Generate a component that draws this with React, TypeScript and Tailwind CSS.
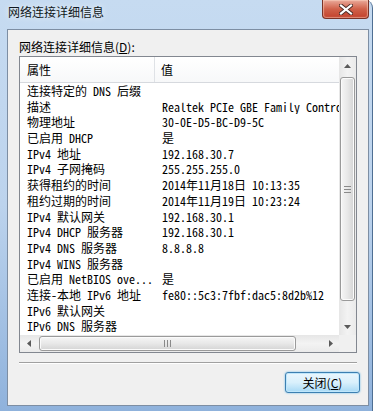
import React from 'react';

const FONT = "font-['Noto_Sans_Mono_CJK_SC','Noto_Sans_CJK_SC',monospace]";

const rows: [string, string][] = [
  ['连接特定的 DNS 后缀', ''],
  ['描述', 'Realtek PCIe GBE Family Controller'],
  ['物理地址', '30-0E-D5-BC-D9-5C'],
  ['已启用 DHCP', '是'],
  ['IPv4 地址', '192.168.30.7'],
  ['IPv4 子网掩码', '255.255.255.0'],
  ['获得租约的时间', '2014年11月18日 10:13:35'],
  ['租约过期的时间', '2014年11月19日 10:23:24'],
  ['IPv4 默认网关', '192.168.30.1'],
  ['IPv4 DHCP 服务器', '192.168.30.1'],
  ['IPv4 DNS 服务器', '8.8.8.8'],
  ['IPv4 WINS 服务器', ''],
  ['已启用 NetBIOS ove...', '是'],
  ['连接-本地 IPv6 地址', 'fe80::5c3:7fbf:dac5:8d2b%12'],
  ['IPv6 默认网关', ''],
  ['IPv6 DNS 服务器', ''],
];

// small scrollbar arrow
const Arrow = ({ dir }: { dir: 'up' | 'down' | 'left' | 'right' }) => {
  const pts = {
    up: '0,4 7,4 3.5,0',
    down: '0,0 7,0 3.5,4',
    left: '4,0 4,7 0,3.5',
    right: '0,0 0,7 4,3.5',
  }[dir];
  const vertical = dir === 'up' || dir === 'down';
  return (
    <svg width={vertical ? 7 : 4} height={vertical ? 4 : 7} viewBox={vertical ? '0 0 7 4' : '0 0 4 7'}>
      <polygon points={pts} fill="#5a5a5a" />
    </svg>
  );
};

export default function App() {
  return (
    <div className={`w-[376px] h-[413px] bg-white overflow-hidden text-[12px] text-black ${FONT}`}>
      <div className="w-[373px] h-[411px] flex flex-col rounded-tr-[8px] border-r border-[#4f6f93] bg-gradient-to-b from-[#c6dbf1] via-[#bcd3ed] to-[#8fb2dc]">
        {/* title bar */}
        <div className="h-[29px] flex items-start shrink-0">
          <span className="pl-[8px] pt-[5px] leading-[14px] text-[12px] text-[#101820] [text-shadow:0_0_6px_rgba(255,255,255,0.9)] font-['Noto_Sans_CJK_SC',sans-serif]">
            网络连接详细信息
          </span>
          <div className="ml-auto mr-[3px] w-[47px] h-[19px] rounded-b-[4px] border border-t-0 border-[#7a3327] bg-gradient-to-b from-[#e9a99a] via-[#d0614a] to-[#c2412c] flex items-center justify-center shadow-[inset_0_0_1px_1px_rgba(255,220,200,0.5)]">
            <svg width="14" height="11" viewBox="0 0 14 11">
              <path d="M2 1.5 L12 9.5 M12 1.5 L2 9.5" stroke="#4a2a24" strokeWidth="4" strokeLinecap="square" />
              <path d="M2 1.5 L12 9.5 M12 1.5 L2 9.5" stroke="#ffffff" strokeWidth="2.2" strokeLinecap="square" />
            </svg>
          </div>
        </div>

        {/* client area */}
        <div className="ml-[7px] mr-[3px] h-[377px] border border-[#7d8ea3] bg-[#f0f0f0] flex flex-col">
          <div className="pl-[11px] pt-[10px] h-[26px] leading-[14px] font-['Noto_Sans_CJK_SC',sans-serif]">
            网络连接详细信息(<span className="underline">D</span>):
          </div>

          {/* list view */}
          <div className="ml-[11px] w-[338px] h-[297px] border border-[#828790] bg-white flex flex-col">
            <div className="flex h-[278px]">
              <div className="w-[319px] overflow-hidden flex flex-col">
                <div className="h-[26px] shrink-0 flex border-b border-[#d6d9de] bg-gradient-to-b from-white to-[#f7f8f9]">
                  <div className="w-[135px] border-r border-[#dfe2e6] pl-[7px] flex items-center font-['Noto_Sans_CJK_SC',sans-serif]">属性</div>
                  <div className="pl-[6px] flex items-center font-['Noto_Sans_CJK_SC',sans-serif]">值</div>
                </div>
                {rows.map(([k, v], i) => (
                  <div key={i} className="h-[15.7px] leading-[15.7px] shrink-0 flex whitespace-nowrap">
                    <div className="w-[135px] pl-[7px] overflow-hidden">{k}</div>
                    <div className="pl-[7px] w-[184px] overflow-hidden">{v}</div>
                  </div>
                ))}
              </div>

              {/* vertical scrollbar */}
              <div className="w-[17px] flex flex-col bg-gradient-to-r from-[#e6e6e6] via-[#f3f3f3] to-[#eaeaea]">
                <div className="h-[17px] flex items-center justify-center"><Arrow dir="up" /></div>
                <div className="flex-1 pt-[3px] pb-[17px] px-[1px] flex">
                  <div className="flex-1 rounded-[3px] border border-[#9a9a9a] bg-gradient-to-r from-[#f6f6f6] via-[#e8e8e8] to-[#d4d4d4] flex flex-col items-center justify-center gap-[2px] shadow-[inset_0_0_0_1px_#fbfbfb]">
                    <div className="w-[7px] h-px bg-[#8a8a8a]" />
                    <div className="w-[7px] h-px bg-[#8a8a8a]" />
                    <div className="w-[7px] h-px bg-[#8a8a8a]" />
                  </div>
                </div>
                <div className="h-[17px] flex items-center justify-center"><Arrow dir="down" /></div>
              </div>
            </div>

            {/* horizontal scrollbar */}
            <div className="flex h-[17px]">
              <div className="w-[319px] flex bg-gradient-to-b from-[#e6e6e6] via-[#f3f3f3] to-[#eaeaea]">
                <div className="w-[17px] flex items-center justify-center"><Arrow dir="left" /></div>
                <div className="w-[257px] ml-[2px] py-[1px] flex">
                  <div className="flex-1 rounded-[3px] border border-[#9a9a9a] bg-gradient-to-b from-[#f6f6f6] via-[#e8e8e8] to-[#d4d4d4] flex items-center justify-center gap-[2px] shadow-[inset_0_0_0_1px_#fbfbfb]">
                    <div className="w-px h-[7px] bg-[#8a8a8a]" />
                    <div className="w-px h-[7px] bg-[#8a8a8a]" />
                    <div className="w-px h-[7px] bg-[#8a8a8a]" />
                  </div>
                </div>
                <div className="ml-auto w-[17px] flex items-center justify-center"><Arrow dir="right" /></div>
              </div>
              <div className="w-[17px] bg-[#f0f0f0]" />
            </div>
          </div>

          {/* separator */}
          <div className="ml-[11px] mt-[9px] w-[338px] h-[2px] border-t border-[#a0a0a0] border-b border-b-white" />

          <div className="mt-[8px] ml-[277px] w-[75px] h-[21px] rounded-[3px] border border-[#3c7fb1] bg-gradient-to-b from-[#eaf6fd] via-[#d9f0fc] to-[#a7d9f5] shadow-[inset_0_0_0_1px_#bfe6fb,0_0_2px_#5ab4e8] flex items-center justify-center leading-[14px] font-['Noto_Sans_CJK_SC',sans-serif]">
            关闭(<span className="underline">C</span>)
          </div>
        </div>
      </div>
    </div>
  );
}
